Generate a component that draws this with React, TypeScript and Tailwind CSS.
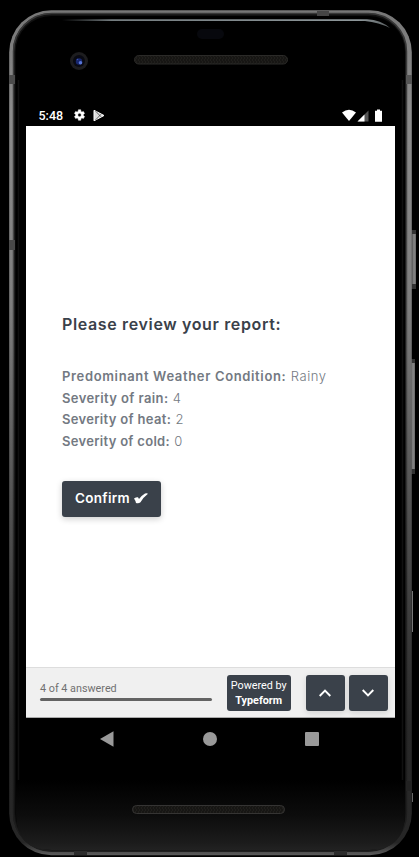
import type { ReactNode } from "react";

function PhoneBody() {
  return (
    <svg className="absolute inset-0" width="419" height="857" viewBox="0 0 419 857" fill="none" aria-hidden="true">
      <defs>
        <linearGradient id="rim" x1="0" y1="0" x2="0" y2="1">
          <stop offset="0" stopColor="#777" />
          <stop offset="0.12" stopColor="#8c8c8c" />
          <stop offset="0.35" stopColor="#7e7e7e" />
          <stop offset="0.55" stopColor="#585858" />
          <stop offset="0.7" stopColor="#404040" />
          <stop offset="0.85" stopColor="#292929" />
          <stop offset="0.985" stopColor="#262626" />
          <stop offset="1" stopColor="#5c5c5c" />
        </linearGradient>
        <linearGradient id="rimInner" x1="0" y1="0" x2="0" y2="1">
          <stop offset="0" stopColor="#383838" />
          <stop offset="0.4" stopColor="#4c4c4c" />
          <stop offset="0.7" stopColor="#222" />
          <stop offset="1" stopColor="#1c1c1c" />
        </linearGradient>
        <linearGradient id="chin" x1="0" y1="780" x2="0" y2="850" gradientUnits="userSpaceOnUse">
          <stop offset="0" stopColor="#000" />
          <stop offset="0.5" stopColor="#0c0c0c" />
          <stop offset="0.9" stopColor="#1c1c1c" />
          <stop offset="1" stopColor="#222" />
        </linearGradient>
        <linearGradient id="shine" x1="62" y1="0" x2="392" y2="0" gradientUnits="userSpaceOnUse">
          <stop offset="0" stopColor="#6b7376" stopOpacity="0" />
          <stop offset="0.15" stopColor="#747c7f" />
          <stop offset="0.9" stopColor="#8e979a" />
          <stop offset="1" stopColor="#8e979a" stopOpacity="0.6" />
        </linearGradient>
        <linearGradient id="key" x1="0" y1="0" x2="1" y2="0">
          <stop offset="0" stopColor="#555" />
          <stop offset="0.5" stopColor="#8a8a8a" />
          <stop offset="1" stopColor="#666" />
        </linearGradient>
        <pattern id="mesh" width="3" height="4" patternUnits="userSpaceOnUse">
          <rect width="3" height="4" fill="#171614" />
          <path d="M0 0l2 2l-2 2" stroke="#24221f" strokeWidth="0.7" />
        </pattern>
      </defs>
      <rect x="411" y="230" width="5" height="59" fill="#333" />
      <rect x="412" y="234" width="4" height="50" fill="url(#key)" />
      <rect x="410" y="359" width="5" height="115" fill="#333" />
      <rect x="411" y="363" width="4" height="106" fill="url(#key)" />
      <rect x="412" y="591" width="1" height="41" fill="#777" />
      <rect x="412" y="793" width="1" height="9" fill="#666" />
      <rect x="9.2" y="10.2" width="402.6" height="845" rx="42" fill="url(#rim)" />
      <rect x="13" y="13" width="393.5" height="838.5" rx="38.5" fill="#111" />
      <rect x="13.5" y="13.5" width="393" height="837.5" rx="38" stroke="url(#rimInner)" strokeWidth="1.5" />
      <rect x="15.5" y="16" width="389.5" height="834" rx="36" fill="#000" />
      <path d="M16 740H405V814Q405 850 369 850H52Q16 850 16 814Z" fill="url(#chin)" />
      <path d="M62 19.2H367Q381 20 390 28Q379 22.5 365 21H62Z" fill="url(#shine)" />
      <path d="M18.5 80V780M402.5 80V780" stroke="#101010" strokeWidth="1.5" />
      <rect x="9" y="75" width="6" height="9" fill="#4b4b4b" />
      <rect x="9" y="240" width="6" height="10" fill="#494949" />
      <rect x="406" y="75" width="6" height="9" fill="#555" />
      <rect x="317" y="11" width="12" height="5" fill="#454545" />
      <rect x="74" y="851" width="13" height="4" fill="#2b2b2b" />
      <rect x="334" y="851" width="13" height="4" fill="#2b2b2b" />
      <rect x="406" y="781" width="6" height="10" fill="#222" />
      <rect x="197" y="29" width="27" height="10" rx="5" fill="#07080d" />
      <circle cx="79" cy="61" r="9" fill="#1d1d1f" />
      <circle cx="79" cy="61" r="6" fill="#090a13" />
      <circle cx="79" cy="61.5" r="3.2" fill="#17266c" />
      <circle cx="80.5" cy="62.8" r="1.8" fill="#5875d8" />
      <circle cx="77.5" cy="59.5" r="0.8" fill="#3e54b0" />
      <rect x="134.5" y="55.5" width="153" height="8.5" rx="4.2" fill="url(#mesh)" stroke="#2b2a28" />
      <rect x="132.5" y="805.5" width="152" height="8" rx="4" fill="url(#mesh)" stroke="#353433" />
    </svg>
  );
}

function StatusBar() {
  return (
    <div className="flex h-[22px] items-center pr-[12.5px] pl-[12.5px] font-['Roboto',sans-serif] text-white">
      <span className="w-[33.5px] pt-0.5 text-[12.5px] leading-none font-medium">5:48</span>
      <svg width="14" height="14" viewBox="0 0 24 24" fill="currentColor">
        <path d="M19.4 13a7.8 7.8 0 0 0 0-2l2.1-1.6-2-3.5-2.5 1a7.6 7.6 0 0 0-1.7-1L15 3h-4l-.6 2.9a7.6 7.6 0 0 0-1.7 1l-2.5-1-2 3.5L6.3 11a7.8 7.8 0 0 0 0 2l-2.1 1.6 2 3.5 2.5-1a7.6 7.6 0 0 0 1.7 1L11 21h4l.4-2.9a7.6 7.6 0 0 0 1.7-1l2.5 1 2-3.5ZM12.9 15a3 3 0 1 1 0-6 3 3 0 0 1 0 6Z" stroke="currentColor" strokeWidth="0.8" />
      </svg>
      <svg className="ml-[7px]" width="12" height="13" viewBox="0 0 12 13" fill="none">
        <path d="M1 1.3L11 6.5L1 11.8Z" fill="#ddd" stroke="#fff" />
        <path d="M2.5 2L8 7.8M2.5 11L8 5.2" stroke="#333" strokeWidth="0.7" />
      </svg>
      <svg className="ml-auto" width="41" height="13" viewBox="0 0 41 13">
        <path d="M0 3.5Q7 -1.8 14 3.5L7 12Z" fill="#fff" />
        <path d="M15.5 12.5L26.5 1.5V12.5Z" fill="#555" />
        <path d="M15.5 12.5L22.5 5.5V12.5Z" fill="#fff" />
        <path d="M33 1.8H35V0.5H38V1.8H40V12.8H33Z" fill="#fff" />
      </svg>
    </div>
  );
}

function Answer({ label, tracking, children }: { label: string; tracking: string; children: ReactNode }) {
  return (
    <p className="whitespace-nowrap">
      <b className={`font-semibold ${tracking}`}>{label}</b> <span className="font-light">{children}</span>
    </p>
  );
}

function Review() {
  return (
    <main className="h-[541px] bg-white px-9 pt-[188px] font-['Inter',sans-serif]">
      <h1 className="text-[16px] leading-5 font-semibold tracking-[0.64px] whitespace-nowrap text-[#3a414a]">Please review your report:</h1>
      <div className="mt-[32.4px] text-[13px] leading-[21.5px] tracking-[0.6px] text-[#737982]">
        <Answer label="Predominant Weather Condition:" tracking="tracking-[0.65px]">Rainy</Answer>
        <Answer label="Severity of rain:" tracking="tracking-[0.4px]">4</Answer>
        <Answer label="Severity of heat:" tracking="tracking-[0.32px]">2</Answer>
        <Answer label="Severity of cold:" tracking="tracking-[0.3px]">0</Answer>
      </div>
      <button className="mt-[29px] flex h-9 w-[99px] items-center rounded-[3px] bg-[#3a414a] pb-0.5 pl-[13px] text-[13.5px] font-semibold tracking-[0.3px] text-white shadow-[0_2px_6px_rgba(0,0,0,0.2)]">
        Confirm
        <svg className="ml-1" width="14" height="11" viewBox="0 0 14 13" preserveAspectRatio="none" fill="currentColor">
          <path d="M0 6.5Q2.5 4.5 4 5L5 7Q8 2.5 11 0.5Q13.2 -0.3 14 1Q9.5 5 6.5 11Q4.5 13 2 11.8Q1.5 9 0 6.5Z" />
        </svg>
      </button>
    </main>
  );
}

function Chevron({ down = false }: { down?: boolean }) {
  return (
    <button className="flex h-[36px] w-[39px] items-center justify-center rounded-[3px] bg-[#3a414a] shadow-[0_2px_6px_rgba(0,0,0,0.12)]">
      <svg width="12" height="8" viewBox="0 0 12 8" fill="none" stroke="#fff" strokeWidth="1.9">
        <path d={down ? "M0.7 1L6 6.3L11.3 1" : "M0.7 7L6 1.7L11.3 7"} />
      </svg>
    </button>
  );
}

function Footer() {
  return (
    <footer className="flex h-[51px] items-start border-t border-b border-t-[#ddd] border-b-[#aaa] bg-[#f0f0f0] pt-[7px] pr-[7.5px] pl-[14px] font-['Roboto',sans-serif]">
      <div className="w-[172px] pt-[7px]">
        <p className="text-[10.8px] leading-[14px] text-[#707070]">4 of 4 answered</p>
        <div className="mt-[1.5px] h-[3.5px] rounded-full bg-[#636363]" />
      </div>
      <div className="ml-[14.5px] flex h-[36px] w-[64.5px] flex-col items-center justify-center rounded-[3px] bg-[#3a414a] pt-[1.5px] text-[10.8px] leading-[14.5px] whitespace-nowrap text-white">
        <span>Powered by</span>
        <b className="font-bold">Typeform</b>
      </div>
      <div className="ml-auto flex gap-1">
        <Chevron />
        <Chevron down />
      </div>
    </footer>
  );
}

function NavigationBar() {
  return (
    <nav className="flex h-[42px] items-center justify-between pr-[76px] pl-[74px]">
      <svg width="14" height="16" viewBox="0 0 14 16" fill="#999"><path d="M0 8L13.5 0.3V15.7Z" /></svg>
      <div className="ml-[1px] size-[14px] rounded-full bg-[#999]" />
      <div className="size-[14px] rounded-[1px] bg-[#999]" />
    </nav>
  );
}

export default function App() {
  return (
    <div className="relative h-[857px] w-[419px] overflow-hidden bg-black">
      <PhoneBody />
      <div className="relative pt-[104px] pr-6 pl-[26px]">
        <StatusBar />
        <Review />
        <Footer />
        <NavigationBar />
      </div>
    </div>
  );
}
